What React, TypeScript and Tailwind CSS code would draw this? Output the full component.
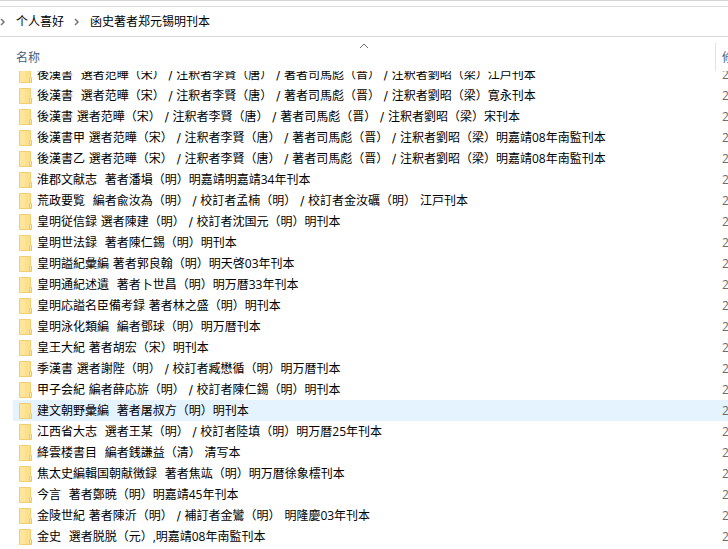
import { Fragment } from "react";

const folders: string[] = [
  "後漢書  選者范曄（宋） / 注釈者李賢（唐） / 著者司馬彪（晋） / 注釈者劉昭（梁）江戸刊本",
  "後漢書  選者范曄（宋） / 注釈者李賢（唐） / 著者司馬彪（晋） / 注釈者劉昭（梁）寛永刊本",
  "後漢書 選者范曄（宋） / 注釈者李賢（唐） / 著者司馬彪（晋） / 注釈者劉昭（梁）宋刊本",
  "後漢書甲 選者范曄（宋） / 注釈者李賢（唐） / 著者司馬彪（晋） / 注釈者劉昭（梁）明嘉靖08年南監刊本",
  "後漢書乙 選者范曄（宋） / 注釈者李賢（唐） / 著者司馬彪（晋） / 注釈者劉昭（梁）明嘉靖08年南監刊本",
  "淮郡文献志  著者潘塤（明）明嘉靖明嘉靖34年刊本",
  "荒政要覧  編者兪汝為（明） / 校訂者孟楠（明） / 校訂者金汝礪（明） 江戸刊本",
  "皇明従信録 選者陳建（明） / 校訂者沈国元（明）明刊本",
  "皇明世法録  著者陳仁錫（明）明刊本",
  "皇明謚紀彙編 著者郭良翰（明）明天啓03年刊本",
  "皇明通紀述遺  著者卜世昌（明）明万暦33年刊本",
  "皇明応謚名臣備考録 著者林之盛（明）明刊本",
  "皇明泳化類編  編者鄧球（明）明万暦刊本",
  "皇王大紀 著者胡宏（宋）明刊本",
  "季漢書 選者謝陛（明） / 校訂者臧懋循（明）明万暦刊本",
  "甲子会紀 編者薛応旂（明） / 校訂者陳仁錫（明）明刊本",
  "建文朝野彙編  著者屠叔方（明）明刊本",
  "江西省大志  選者王某（明） / 校訂者陸填（明）明万暦25年刊本",
  "絳雲楼書目  編者銭謙益（清） 清写本",
  "焦太史編輯国朝献徴録  著者焦竑（明）明万暦徐象橒刊本",
  "今言  著者鄭暁（明）明嘉靖45年刊本",
  "金陵世紀 著者陳沂（明） / 補訂者金鸞（明） 明隆慶03年刊本",
  "金史  選者脱脱（元）,明嘉靖08年南監刊本",
];

const HOVERED = 16;

function Chevron() {
  return (
    <svg className="h-2 w-[6px] shrink-0" viewBox="0 0 6 8" fill="none" stroke="#767676" strokeWidth="1.5" aria-hidden="true">
      <path d="M1 1l3 3-3 3" />
    </svg>
  );
}

function FolderIcon() {
  return (
    <svg className="h-4 w-[13px] shrink-0" viewBox="0 0 13 16" aria-hidden="true">
      <path d="M.5.5H11.5V9.5L12.5 11V15.5H.5z" fill="#fce08c" stroke="#efce74" />
      <path d="M1 1h5v14H1z" fill="#fde69c" />
      <path d="M10.5 15V11l1-1.500 1 1.500v4z" fill="#fce9a6" stroke="#e9c461" strokeWidth=".8" />
    </svg>
  );
}

/* Spaces and slashes take a wider face than the ideographs around them. */
function FolderName({ name }: { name: string }) {
  return (
    <span className="whitespace-pre">
      {name.split(/([ /]+)/).map((part, i) =>
        i % 2 ? (
          <span key={i} className="font-['DejaVu_Sans',sans-serif]">
            {part}
          </span>
        ) : (
          <Fragment key={i}>{part}</Fragment>
        ),
      )}
    </span>
  );
}

export default function App() {
  return (
    <div
      lang="zh-CN"
      className="h-screen overflow-hidden bg-white font-['Open_Sans','Noto_Sans_CJK_SC',sans-serif] text-xs leading-5 text-black"
    >
      <div className="h-px bg-[#d5d5d5]" />
      <nav aria-label="路径" className="mt-[5px] flex h-[31px] items-center gap-[10px] border-y border-[#d9d9d9]">
        <Chevron />
        <a href="#favorites">个人喜好</a>
        <Chevron />
        <a href="#current">函史著者郑元锡明刊本</a>
      </nav>
      <table className="w-full table-fixed border-collapse">
        <colgroup>
          <col className="w-[13px]" />
          <col />
          <col className="w-[13px]" />
        </colgroup>
        <thead>
          <tr className="h-[34px] text-left text-[#4c607a]">
            <td className="p-0" />
            <th scope="col" className="p-0 font-normal">
              <button type="button" className="relative flex h-[34px] w-full items-center pt-2 pl-[3px]">
                名称
                <svg className="absolute inset-x-0 top-[6px] mx-auto h-[6px] w-[10px]" viewBox="0 0 10 6" fill="none" stroke="#6d6d6d" aria-hidden="true">
                  <path d="M1 5l4-4 4 4" />
                </svg>
              </button>
            </th>
            <th scope="col" className="p-0 font-normal">
              <div className="mt-[6px] flex h-7 items-center overflow-hidden border-l border-[#e2e2e2] pl-[6px]">
                <span className="mt-[2px]">修</span>
              </div>
            </th>
          </tr>
        </thead>
        <tbody>
          {folders.map((name, i) => {
            /* The first row is scrolled partly under the header. */
            const clip = i === 0 ? "flex h-[14px] items-end overflow-hidden" : "flex h-[21px] items-end overflow-hidden";
            const tint = i === HOVERED ? "bg-[#e5f3ff] p-0" : "p-0";
            return (
              <tr key={i}>
                <td className="p-0" />
                <td className={tint}>
                  <div className={clip}>
                    <div className="flex h-[21px] shrink-0 items-center gap-[5px] pl-[6px]">
                      <FolderIcon />
                      <FolderName name={name} />
                    </div>
                  </div>
                </td>
                <td className={tint}>
                  <div className={clip}>
                    <div className="flex h-[21px] shrink-0 items-center pl-[7px] text-[#6d6d6d]">2</div>
                  </div>
                </td>
              </tr>
            );
          })}
        </tbody>
      </table>
    </div>
  );
}
